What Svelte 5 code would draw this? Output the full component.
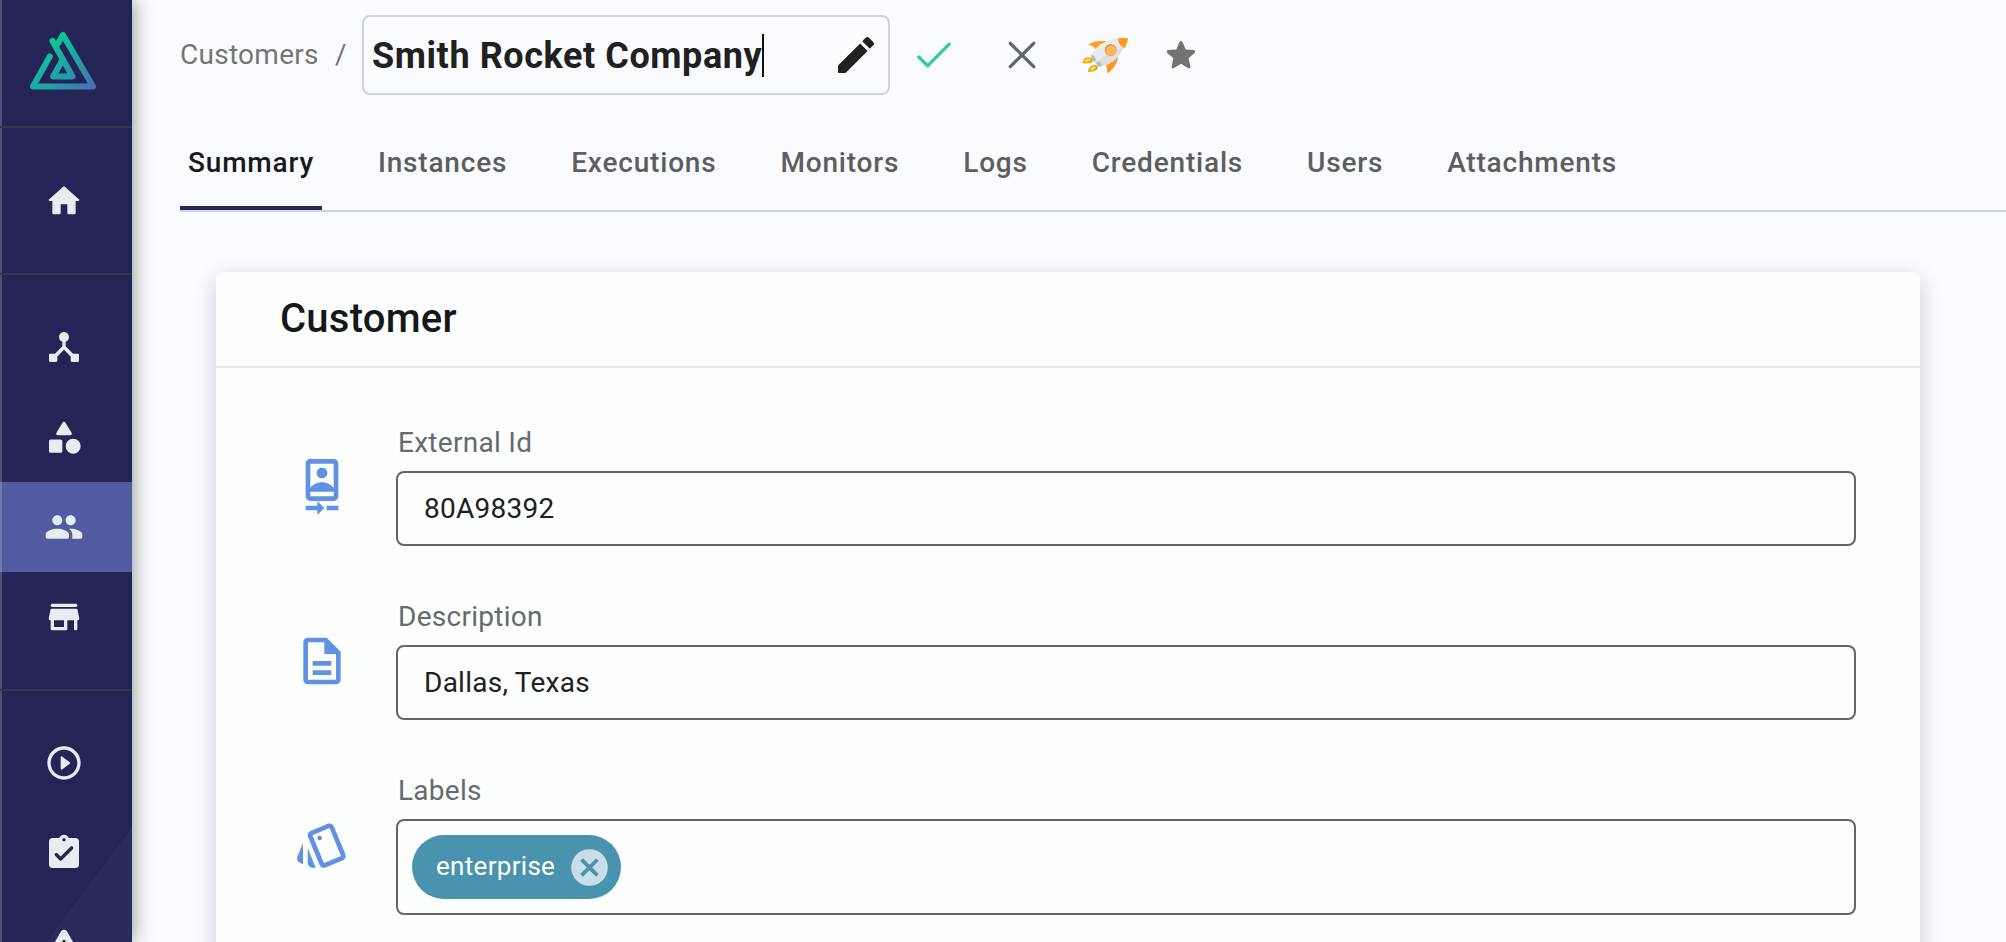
<script>
  const sections = [
    [{ name: 'home', d: 'M10 19v-5h4v5c0 .55.45 1 1 1h3c.55 0 1-.45 1-1v-7h1.7c.46 0 .68-.57.33-.87L12.67 3.6c-.38-.34-.96-.34-1.34 0l-8.36 7.53c-.34.3-.13.87.33.87H5v7c0 .55.45 1 1 1h3c.55 0 1-.45 1-1z' }],
    [
      { name: 'hub', d: 'M17.4 16 13 11.6V8.82C14.16 8.4 15 7.3 15 6c0-1.66-1.34-3-3-3S9 4.34 9 6c0 1.3.84 2.4 2 2.82v2.78L6.6 16H3.7c-.4 0-.7.3-.7.7v3.6c0 .4.3.7.7.7h3.6c.4 0 .7-.3.7-.7v-2.6l4-4 4 4v2.6c0 .4.3.7.7.7h3.6c.4 0 .7-.3.7-.7v-3.6c0-.4-.3-.7-.7-.7z' },
      { name: 'category', d: 'M11.15 3.4 7.43 9.48c-.41.66.07 1.52.85 1.52h7.43c.78 0 1.26-.86.85-1.52L12.85 3.4c-.39-.64-1.31-.64-1.7 0zM22 17.5a4.5 4.5 0 1 1-9 0 4.5 4.5 0 0 1 9 0zM4 21.5h6c.55 0 1-.45 1-1v-6c0-.55-.45-1-1-1H4c-.55 0-1 .45-1 1v6c0 .55.45 1 1 1z' },
      { name: 'people', active: true, d: 'M16 11c1.66 0 2.99-1.34 2.99-3S17.66 5 16 5s-3 1.34-3 3 1.34 3 3 3zm-8 0c1.66 0 2.99-1.34 2.99-3S9.66 5 8 5 5 6.34 5 8s1.34 3 3 3zm0 2c-2.33 0-7 1.17-7 3.5V18c0 .55.45 1 1 1h12c.55 0 1-.45 1-1v-1.5c0-2.33-4.67-3.5-7-3.5zm8 0c-.29 0-.62.02-.97.05.02.01.03.03.04.04 1.14.83 1.93 1.94 1.93 3.41V18c0 .35-.07.69-.18 1H22c.55 0 1-.45 1-1v-1.5c0-2.33-4.67-3.5-7-3.5z' },
      { name: 'store', d: 'M5 6h14c.55 0 1-.45 1-1s-.45-1-1-1H5c-.55 0-1 .45-1 1s.45 1 1 1zm15.16 1.8c-.09-.46-.5-.8-.98-.8H4.82c-.48 0-.89.34-.98.8l-1 5c-.12.62.35 1.2.98 1.2H4v5c0 .55.45 1 1 1h8c.55 0 1-.45 1-1v-5h4v5c0 .55.45 1 1 1s1-.45 1-1v-5h.18c.63 0 1.1-.58.98-1.2l-1-5zM12 18H6v-4h6v4z' }
    ],
    [
      { name: 'executions', d: 'M10.8 15.9l4.67-3.5c.27-.2.27-.6 0-.8L10.8 8.1c-.33-.25-.8-.01-.8.4v7c0 .41.47.65.8.4zM12 2C6.48 2 2 6.48 2 12s4.48 10 10 10 10-4.48 10-10S17.52 2 12 2zm0 18c-4.41 0-8-3.59-8-8s3.59-8 8-8 8 3.59 8 8-3.59 8-8 8z' },
      { name: 'assignments', d: 'M19 3h-4.18C14.4 1.84 13.3 1 12 1s-2.4.84-2.82 2H5c-1.1 0-2 .9-2 2v14c0 1.1.9 2 2 2h14c1.1 0 2-.9 2-2V5c0-1.1-.9-2-2-2zm-7 0c.55 0 1 .45 1 1s-.45 1-1 1-1-.45-1-1 .45-1 1-1zm-2.71 13.29L6.7 13.7c-.39-.39-.39-1.02 0-1.41.39-.39 1.02-.39 1.41 0L10 14.17l5.88-5.88c.39-.39 1.02-.39 1.41 0 .39.39.39 1.02 0 1.41l-6.59 6.59c-.38.39-1.02.39-1.41 0z' },
      { name: 'alerts', d: 'M4.47 21h15.06c1.54 0 2.5-1.67 1.73-3L13.73 4.99c-.77-1.33-2.69-1.33-3.46 0L2.74 18c-.77 1.33.19 3 1.73 3zM12 14c-.55 0-1-.45-1-1v-2c0-.55.45-1 1-1s1 .45 1 1v2c0 .55-.45 1-1 1zm1 4h-2v-2h2v2z' }
    ]
  ];

  const tabs = ['Summary', 'Instances', 'Executions', 'Monitors', 'Logs', 'Credentials', 'Users', 'Attachments'];

  const fields = [
    { label: 'External Id', value: '80A98392', d: 'M10 20H5v2h5v2l3-3-3-3v2zm4 0v2h5v-2h-5zM12 8.300c1.200 0 2.300-1 2.300-2.300s-1-2.300-2.300-2.300S9.700 4.700 9.700 6s1 2.300 2.300 2.300zm5-8.300H7C5.9 0 5 .9 5 2v14c0 1.1.9 2 2 2h10c1.1 0 2-.9 2-2V2c0-1.1-.9-2-2-2zm0 16H7v-2h10v2zm0-3.5c-.9-1.5-2.9-2.5-5-2.5s-4.1 1-5 2.5V2h10v10.5z' },
    { label: 'Description', value: 'Dallas, Texas', d: 'M8 16h8v2H8zm0-4h8v2H8zm6-10H6c-1.1 0-2 .9-2 2v16c0 1.1.89 2 1.99 2H18c1.1 0 2-.9 2-2V8l-6-6zm4 18H6V4h7v5h5v11z' },
    { label: 'Labels', chips: ['enterprise'], d: 'M2.53 19.65l1.34.56v-9.03l-2.43 5.86c-.41 1.02.08 2.19 1.09 2.61zm19.5-3.7L17.07 3.98c-.31-.75-1.04-1.21-1.81-1.23-.26 0-.53.04-.79.15L7.1 5.95c-.75.31-1.21 1.03-1.23 1.8-.01.27.04.54.15.8l4.96 11.97c.31.76 1.05 1.22 1.83 1.23.26 0 .52-.05.77-.15l7.36-3.05c1.02-.42 1.51-1.59 1.09-2.6zm-9.2 3.8L7.87 7.79l7.35-3.04h.01l4.95 11.95-7.35 3.05zM11 10a1 1 0 1 0 0-2 1 1 0 0 0 0 2zM5.88 19.75c0 1.1.9 2 2 2h1.45l-3.45-8.34v6.34z' }
  ];
</script>

<div class="app">
  <nav class="sidebar">
    <div class="logo">
      <svg width="76" height="68" viewBox="0 0 76 68" fill="none">
        <defs>
          <linearGradient id="brand" gradientUnits="userSpaceOnUse" x1="22" y1="12" x2="66" y2="62">
            <stop offset="0" stop-color="#08cc94" />
            <stop offset="0.5" stop-color="#1fa3a6" />
            <stop offset="1" stop-color="#4a6db4" />
          </linearGradient>
        </defs>
        <g stroke="url(#brand)" stroke-width="6" stroke-linecap="round" stroke-linejoin="round">
          <path d="M23.800 28.500 7 58.500h60L37 7l-5 8.500" />
          <path d="M26.500 13 46.500 48.500H27.200L36.500 32" />
        </g>
      </svg>
    </div>
    {#each sections as items}
      <div class="section">
        {#each items as item}
          <a class="nav-item" class:active={item.active} href="#{item.name}" aria-label={item.name}>
            <svg width="40" height="40" viewBox="0 0 24 24"><path d={item.d} fill="#e8ebf0" /></svg>
          </a>
        {/each}
      </div>
    {/each}
  </nav>

  <main>
    <header>
      <span class="crumb">Customers</span>
      <span class="slash">/</span>
      <div class="title-box">
        <span class="title">Smith Rocket Company</span><span class="caret"></span>
        <svg class="pencil" width="36" height="36" viewBox="3 3 18 18">
          <path fill="#202020" d="M3 17.25V20.600q0 .4.4.4H6.750L17.810 9.940l-3.750-3.750L3 17.250zM20.710 7.040c.39-.39.39-1.020 0-1.410l-2.340-2.340c-.39-.39-1.020-.39-1.410 0l-1.830 1.830 3.750 3.750 1.830-1.830z" />
        </svg>
      </div>
      <svg class="check" width="34" height="28" viewBox="0 0 34 28" fill="none"><path d="M1.800 16 10.600 24.800 32.200 3.200" stroke="#2fcf96" stroke-width="3.300" stroke-linecap="round" stroke-linejoin="round" /></svg>
      <svg class="close" width="28" height="28" viewBox="0 0 28 28"><path d="M2.300 2.300 25.700 25.700M25.700 2.300 2.300 25.700" stroke="#5e676b" stroke-width="3.300" stroke-linecap="round" /></svg>
      <svg class="rocket" width="47" height="37" viewBox="15 16 141 111">
        <path d="M32 39C48 28 70 27 92 29L58 56C54 46 46 40 32 39z" fill="#ff9d24" />
        <path d="M123 73C121 98 108 115 90 125 92 112 89 104 84 96z" fill="#fb9724" />
        <path d="M42 74C50 48 84 22 126 20l16 26C124 82 96 104 62 105z" fill="#ebebeb" />
        <path d="M52 90 138 46C124 82 96 104 62 105z" fill="#dedfdf" />
        <path d="M123 20C134 18 145 18 153 20 152 31 148 41 142 50 131 44 123 34 123 20z" fill="#ff9b20" />
        <circle cx="101" cy="55" r="18" fill="#df9a4e" />
        <circle cx="102" cy="56.500" r="15" fill="#ffb558" />
        <path d="m41 72 7-2 10 14-8 7zM56 94l10-5 9 10-8 7z" fill="#b4bbbf" />
        <path d="M16 95C18 80 29 74 42 78c8 5 7 14-2 16-8 2-16 1-24 1z" fill="#e8a51e" />
        <path d="M22 91C25 83 32 79 40 81c2 6-8 11-18 10z" fill="#ffe532" />
        <path d="M33 121C34 107 43 98 57 100c9 6 7 14-3 17-8 3-14 3-21 4z" fill="#e8a51e" />
        <path d="M39 116C41 108 48 103 56 104c3 6-7 12-17 12z" fill="#ffe532" />
      </svg>
      <svg class="star" width="40" height="40" viewBox="0 0 24 24"><path fill="#737373" d="M12 17.270l4.150 2.510c.76.46 1.690-.22 1.490-1.080l-1.100-4.720 3.670-3.180c.67-.58.31-1.680-.57-1.750l-4.830-.41-1.890-4.460c-.34-.81-1.500-.81-1.840 0L9.190 8.630l-4.830.41c-.88.07-1.240 1.170-.57 1.750l3.670 3.180-1.100 4.720c-.2.86.73 1.540 1.490 1.080l4.150-2.500z" /></svg>
    </header>

    <div class="tabs">
      {#each tabs as tab, i}
        <button class="tab" class:selected={i === 0}>{tab}</button>
      {/each}
    </div>

    <section class="card">
      <h2>Customer</h2>
      <div class="fields">
        {#each fields as field}
          <div class="row">
            <svg width="56" height="56" viewBox="0 0 24 24"><path d={field.d} fill="#5f92e3" /></svg>
            <div class="field">
              <div class="label">{field.label}</div>
              {#if field.chips}
                <div class="control chips">
                  {#each field.chips as chip}
                    <span class="chip">
                      <span class="chip-text">{chip}</span>
                      <svg width="37" height="37" viewBox="0 0 37 37"><circle cx="18.500" cy="18.500" r="18.300" fill="#c8dfe8" /><path d="m10.600 10.600 15.800 15.800m0-15.800L10.600 26.400" stroke="#4a93af" stroke-width="3.700" /></svg>
                    </span>
                  {/each}
                </div>
              {:else}
                <div class="control">{field.value}</div>
              {/if}
            </div>
          </div>
        {/each}
      </div>
    </section>
  </main>
</div>

<style>
  :global(body) { margin: 0; background: #fafbfe; overflow: hidden; }
  .app { display: flex; width: 100%; height: 942px; overflow: hidden; background: #fafbfe; font-family: Roboto, sans-serif; font-size: 28px; color: #202020; }
  svg { display: block; flex: none; }

  .sidebar {
    box-sizing: border-box; width: 132px; height: 942px; flex: none; overflow: hidden; z-index: 1;
    background: linear-gradient(to right, #4f507a 2px, transparent 2px), linear-gradient(to bottom right, transparent 50%, #2a2b5c 50.3%) right bottom / 86px 115px no-repeat, #242556;
    box-shadow: 2px 0 18px rgba(0, 0, 0, 0.38);
  }
  .logo { box-sizing: border-box; height: 126px; padding: 28px 0 0 26px; }
  .section { border-top: 2px solid #34393f; padding: 27px 0; }
  .section:nth-child(2) { padding-top: 28px; }
  .nav-item { box-sizing: border-box; display: flex; height: 90px; align-items: center; padding-left: 44px; }
  .active { background: linear-gradient(to right, #717bb2 2px, #515ca0 2px); }

  main { flex: 1; min-width: 0; padding-left: 48px; }
  header { display: flex; height: 110px; box-sizing: border-box; padding-top: 15px; align-items: flex-start; }
  header > * { flex: none; }
  .crumb, .slash { line-height: 80px; color: #757575; letter-spacing: 0.28px; }
  .crumb { width: 155px; }
  .slash { width: 27px; }
  .title-box { box-sizing: border-box; display: flex; align-items: center; width: 528px; height: 80px; border: 2px solid #cad6dc; border-radius: 8px; padding: 0 14px 0 8px; }
  .title { padding-top: 1px; font-size: 36px; font-weight: 700; white-space: nowrap; letter-spacing: 0.58px; }
  .caret { width: 2px; height: 43px; background: #111; }
  .pencil { margin-left: auto; }
  .check { margin: 26px 0 0 27px; }
  .close { margin: 26px 0 0 57px; }
  .rocket { margin: 22px 0 0 46px; }
  .star { margin: 20px 0 0 32px; }

  .tabs { display: flex; gap: 48px; height: 102px; box-sizing: border-box; border-bottom: 2px solid #cad6dc; }
  .tab { box-sizing: border-box; height: 100px; border: 0; border-bottom: 4px solid transparent; padding: 9px 8px 0; background: none; font: 500 28px Roboto, sans-serif; letter-spacing: 0.81px; color: #5c5e61; }
  .selected { color: #17191c; border-bottom-color: #22265c; }

  .card { width: 1704px; height: 900px; margin: 60px 0 0 36px; border-radius: 8px; background: #fdfefe; box-shadow: 0 5px 22px rgba(0, 0, 0, 0.18); }
  h2 { box-sizing: border-box; height: 96px; margin: 0; padding-left: 64px; border-bottom: 2px solid #e6e8ee; font-size: 40px; font-weight: 500; line-height: 94px; letter-spacing: 0.25px; color: #151819; }
  .fields { display: flex; flex-direction: column; gap: 56px; padding: 60px 64px 0 78px; }
  .row { display: flex; align-items: center; gap: 46px; }
  .row:last-child > svg { margin-top: -1px; }
  .field { flex: 1; }
  .label { padding-left: 2px; margin-bottom: 14px; line-height: 29px; letter-spacing: 0.28px; color: #646b6e; }
  .control { box-sizing: border-box; display: flex; align-items: center; height: 75px; padding: 0 26px; border: 2px solid #5f676a; border-radius: 8px; letter-spacing: 0.25px; }
  .chips { height: 96px; padding: 0 14px; }
  .chip { box-sizing: border-box; display: flex; align-items: center; justify-content: space-between; width: 209px; height: 64px; padding: 0 13.5px 0 24px; border-radius: 32px; background: #4a93af; color: #fff; }
  .chip-text { font-size: 26px; letter-spacing: 0.3px; padding-bottom: 2px; }
</style>
